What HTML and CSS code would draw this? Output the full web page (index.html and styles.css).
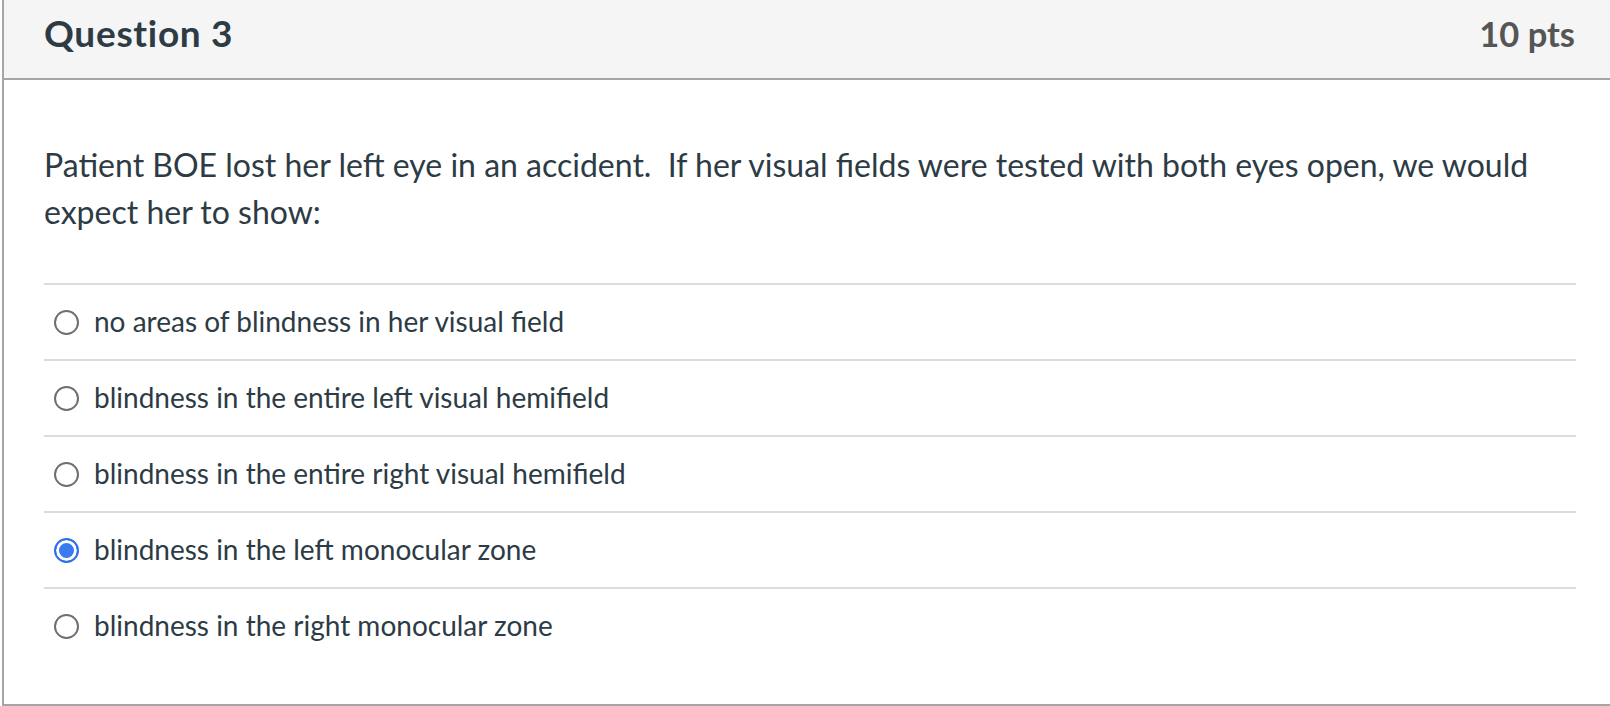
FILE: index.html
```html
<!DOCTYPE html>
<html lang="en">
<head>
    <meta charset="UTF-8">
    <title>Question 3</title>
    <link rel="stylesheet" href="styles.css">
</head>
<body>
    <div class="question">
        <div class="question-header">
            <h2 class="question-title">Question 3</h2>
            <div class="question-points">10 pts</div>
        </div>
        <div class="question-body">
            <p class="question-text">Patient BOE lost her left eye in an accident.&nbsp; If her visual fields were tested with both eyes open, we would expect her to show:</p>
            <div class="answers">
                <label class="answer">
                    <span class="radio"></span>
                    <span class="answer-text">no areas of blindness in her visual field</span>
                </label>
                <label class="answer">
                    <span class="radio"></span>
                    <span class="answer-text">blindness in the entire left visual hemifield</span>
                </label>
                <label class="answer">
                    <span class="radio"></span>
                    <span class="answer-text">blindness in the entire right visual hemifield</span>
                </label>
                <label class="answer">
                    <span class="radio checked"></span>
                    <span class="answer-text">blindness in the left monocular zone</span>
                </label>
                <label class="answer">
                    <span class="radio"></span>
                    <span class="answer-text">blindness in the right monocular zone</span>
                </label>
            </div>
        </div>
    </div>
</body>
</html>
```

FILE: styles.css
```css
* {
    margin: 0;
    padding: 0;
    box-sizing: border-box;
}

body {
    font-family: 'Lato', 'Liberation Sans', sans-serif;
    color: #2d3b45;
    background-color: white;
    overflow: hidden;
}

.question {
    width: 1612px;
    height: 706px;
    margin-left: 2px;
    border: 2px solid #a5a5a5;
    border-top: none;
}

.question-header {
    display: flex;
    justify-content: space-between;
    align-items: baseline;
    height: 80px;
    padding: 11px 37px 0 40px;
    background-color: #f5f5f5;
    border-bottom: 2px solid #a5a5a5;
}

.question-title {
    font-size: 37px;
    font-weight: 700;
    line-height: 1.2;
    letter-spacing: 0.7px;
}

.question-points {
    font-size: 34.5px;
    font-weight: 700;
    line-height: 1.2;
    color: #555;
}

.question-body {
    padding: 61px 36px 0 40px;
}

.question-text {
    font-size: 32px;
    line-height: 47px;
    margin-bottom: 48px;
}

.answer {
    display: flex;
    align-items: center;
    gap: 15px;
    height: 76px;
    padding-left: 10px;
    border-top: 2px solid #dcdcdc;
    font-size: 28px;
}

.answer-text {
    margin-bottom: 3px;
}

.radio {
    width: 25px;
    height: 25px;
    border: 2px solid #6f6f6f;
    border-radius: 50%;
    flex-shrink: 0;
}

.radio.checked {
    border-color: #2f6fe8;
    background-color: #3a7af0;
    box-shadow: inset 0 0 0 3px white;
}
```
